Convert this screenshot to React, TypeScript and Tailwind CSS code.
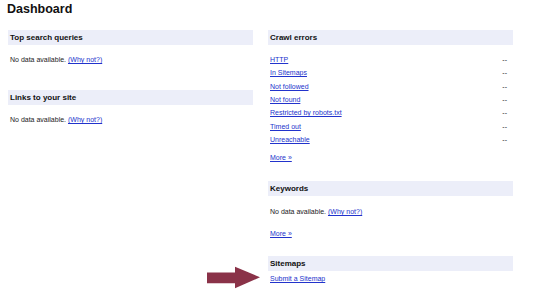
import React from 'react';

const crawlErrors = [
  'HTTP',
  'In Sitemaps',
  'Not followed',
  'Not found',
  'Restricted by robots.txt',
  'Timed out',
  'Unreachable',
];

function Header({ title, className = '' }: { title: string; className?: string }) {
  return (
    <div className={`h-[15px] bg-[#eceef9] pl-[2px] text-[8px] leading-[15px] font-bold text-[#111] ${className}`}>
      {title}
    </div>
  );
}

function Link({ children }: { children: React.ReactNode }) {
  return <a className="text-[#2233cc] underline cursor-pointer">{children}</a>;
}

function NoData({ className = '' }: { className?: string }) {
  return (
    <div className={`h-[14px] pl-[2px] leading-[14px] ${className}`}>
      No data available. <Link>(Why not?)</Link>
    </div>
  );
}

export default function App() {
  return (
    <div
      className="relative w-[560px] h-[290px] overflow-hidden bg-white text-[7px] text-[#222]"
      style={{ fontFamily: '"Liberation Sans", Arial, sans-serif' }}
    >
      <div className="h-[30px] pt-[3px] pl-[7px] text-[12.5px] leading-[12.5px] font-bold text-[#111]">
        Dashboard
      </div>

      <div className="flex gap-[15px] pl-[8px]">
        {/* left column */}
        <div className="w-[245px]">
          <Header title="Top search queries" />
          <NoData className="mt-[8px]" />
          <Header title="Links to your site" className="mt-[23px]" />
          <NoData className="mt-[8px]" />
        </div>

        {/* right column */}
        <div className="w-[245px]">
          <Header title="Crawl errors" />
          <div className="mt-[8px]">
            {crawlErrors.map((label) => (
              <div key={label} className="flex h-[13.33px] items-center justify-between pl-[2px] pr-[6px] leading-[13.33px]">
                <Link>{label}</Link>
                <span>--</span>
              </div>
            ))}
          </div>
          <div className="mt-[5px] h-[14px] pl-[2px] leading-[14px]">
            <Link>More »</Link>
          </div>

          <Header title="Keywords" className="mt-[16px]" />
          <NoData className="mt-[9px]" />
          <div className="mt-[8px] h-[14px] pl-[2px] leading-[14px]">
            <Link>More »</Link>
          </div>

          <Header title="Sitemaps" className="mt-[15px]" />
          <div className="mt-[1px] h-[14px] pl-[2px] leading-[14px]">
            <Link>Submit a Sitemap</Link>
          </div>
        </div>
      </div>

      {/* annotation arrow */}
      <svg className="absolute left-[206px] top-[266px]" width="56" height="24" viewBox="0 0 56 24">
        <polygon points="1,6.5 29,6.5 29,0.7 54,11.3 29,22.3 29,17.3 1,17.3" fill="#8a3248" />
      </svg>
    </div>
  );
}
